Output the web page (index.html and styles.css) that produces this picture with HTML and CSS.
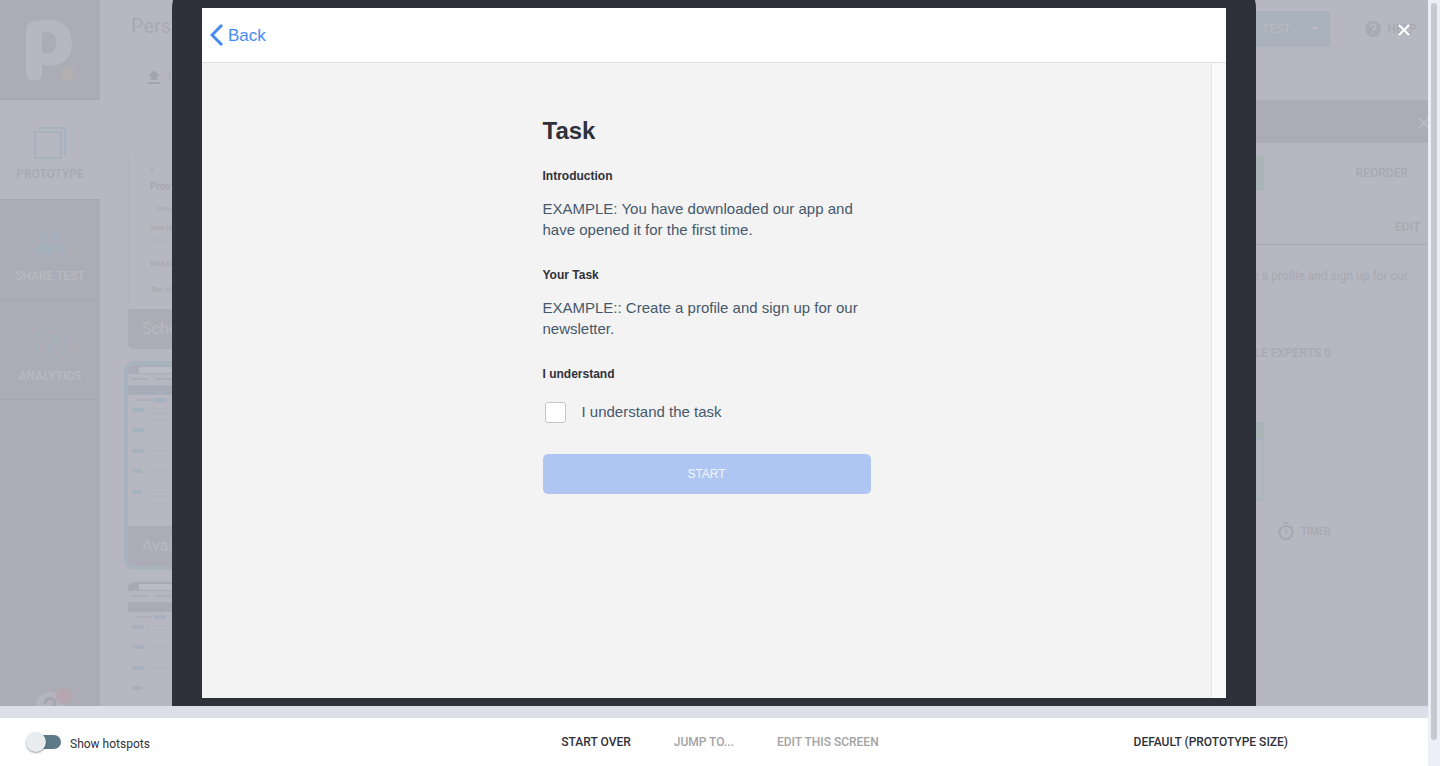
FILE: index.html
```html
<!DOCTYPE html>
<html lang="en">
<head>
<meta charset="utf-8">
<title>Prototype preview</title>
<link rel="stylesheet" href="styles.css">
</head>
<body>
<div class="app">
  <main class="column">
    <div class="stage">
      <div class="workspace">
        <nav class="sidebar">
          <div class="logo">
            <svg width="100" height="100" viewBox="0 0 100 100" aria-hidden="true">
              <path fill="#b7b7c1" fill-rule="evenodd" d="M26 30Q26 24 32 22Q40 19.500 50 20C64 20 72 29 72 43C72 57 64 65.500 51 65.500Q46 65.500 42 64V74Q42 80 36 80H32Q26 80 26 74ZM42 33V52Q45 53.500 48 53.500Q56 53 56 43Q56 32 48 32Q45 32 42 33Z"/>
              <path fill="#b5b0b0" d="M61 79.500V73A6.500 6.500 0 1 1 67.500 79.500Z"/>
            </svg>
          </div>
          <a class="side-item side-active" href="#">
            <svg width="32" height="32" viewBox="0 0 32 32" fill="none" stroke="#a5b3be" stroke-width="2" aria-hidden="true"><path d="M1 5H27V31H1ZM4 1H31V28"/></svg>
            <span>PROTOTYPE</span>
          </a>
          <a class="side-item" href="#">
            <svg width="32" height="32" viewBox="0 0 32 32" fill="#a3b0bb" aria-hidden="true"><circle cx="10.500" cy="9.500" r="4.500"/><circle cx="22" cy="9.500" r="4.500"/><path d="M0 27V23C0 19 7 17 10.500 17S20.500 19 20.500 23V27ZM21.500 17C25 17 32 19 32 23V27H23V23C23 20.500 22 18.500 20.500 17Z"/></svg>
            <span>SHARE TEST</span>
          </a>
          <a class="side-item" href="#">
            <svg width="32" height="32" viewBox="0 0 32 32" fill="none" stroke="#a3b0bb" stroke-width="2" aria-hidden="true"><circle cx="16" cy="16" r="15"/><path d="M6 16A10.500 10.500 0 0 1 26 16M17 20.500L20 9"/><circle cx="16" cy="23" r="2.500"/></svg>
            <span>ANALYTICS</span>
          </a>
          <button class="side-help" type="button" aria-label="Help">
            <svg width="40" height="40" viewBox="0 0 40 40" aria-hidden="true"><circle cx="16" cy="19" r="15" fill="#b4b4be"/><path d="M11 16C11 8 22 9 21 16C21 19 16 20 16 24" fill="none" stroke="#a5a5af" stroke-width="3"/><circle cx="30" cy="8" r="8" fill="#b7a6b0"/></svg>
          </button>
        </nav>

        <section class="board">
          <header class="board-head">
            <h1 class="project">Pers</h1>
            <button class="upload" type="button">
              <svg width="12" height="14" viewBox="0 0 12 14" fill="#a3a3ad" aria-hidden="true"><path d="M6 0L12 6H9V10H3V6H0ZM0 12H12V14H0Z"/></svg>
              <span>U</span>
            </button>
          </header>
          <div class="cards">
            <article class="card">
              <div class="card-list">
                <span>×</span><b class="provider">Prov</b><span class="indent">3 reque</span><b>Your Up</b><span class="faint">Date</span><b>Wed 12.</b><b>Thu 12.</b>
              </div>
              <h2 class="card-title">Sche</h2>
            </article>
            <article class="card card-selected">
              <svg class="thumb" width="240" height="161" viewBox="0 0 240 161" aria-hidden="true">
                <rect width="240" height="9" fill="#a8adb8"/><rect x="11" y="2" width="229" height="6" fill="#b9bbc5"/>
                <path d="M3 14H20M27 14H43M8 35H24" stroke="#aeaeb9" stroke-width="2"/>
                <rect y="20" width="240" height="10" fill="#a7adb8"/>
                <path d="M28 35H36M6 45H14M6 65H14M6 86H14M6 106H12M6 127H12" stroke="#a5b2c0" stroke-width="4" stroke-linecap="round"/>
                <path d="M19 44H44M19 48H42M19 65H44M19 86H44M19 106H44M19 110H22M19 127H44M19 131H42" stroke="#b0b1bb"/>
                <path d="M4 55H15M24 55H42M4 76H15M24 76H42M4 97H15M24 97H42M4 117H15M24 117H42M4 138H15M24 138H42" stroke="#b4b4be"/>
              </svg>
              <h2 class="card-title">Avai</h2>
            </article>
            <article class="card">
              <svg class="thumb" width="240" height="161" viewBox="0 0 240 161" aria-hidden="true">
                <rect width="240" height="9" fill="#a8a9b4"/><rect x="11" y="2" width="229" height="6" fill="#b9bbc5"/>
                <path d="M3 14H20M27 14H43M8 35H24" stroke="#aeaeb9" stroke-width="2"/>
                <rect y="20" width="240" height="10" fill="#a8aab6"/>
                <path d="M28 35H36M6 45H14M6 65H14M6 86H14M6 106H12" stroke="#a8b0bf" stroke-width="4" stroke-linecap="round"/>
                <path d="M19 44H44M19 48H42M19 65H44M19 86H44M19 106H44M19 110H22" stroke="#b0b1bb"/>
                <path d="M4 55H15M24 55H42M4 76H15M24 76H42M4 97H15M24 97H42M4 117H15M24 117H42" stroke="#b4b4be"/>
              </svg>
            </article>
          </div>
        </section>

        <aside class="panel">
          <header class="panel-top">
            <button class="test" type="button"><span>TEST</span>
              <svg width="28" height="20" viewBox="0 0 28 20" aria-hidden="true"><path d="M5 0V20" stroke="#b1b5bf"/><path d="M12 8H20L16 12Z" fill="#b9bac4"/></svg>
            </button>
            <a class="help" href="#">
              <svg width="18" height="18" viewBox="0 0 18 18" aria-hidden="true"><circle cx="9" cy="9" r="8" fill="#a9a9b3"/><path d="M6.500 7C6.500 3 12 4 11.500 7C11.500 8.500 9 9 9 11M9 12.500V14" fill="none" stroke="#b7b7c1" stroke-width="2"/></svg>
              <span>HELP</span>
            </a>
          </header>
          <div class="panel-bar">
            <svg width="12" height="12" viewBox="0 0 12 12" stroke="#b9b9c2" stroke-width="2" aria-hidden="true"><path d="M1 1L11 11M11 1L1 11"/></svg>
          </div>
          <div class="reorder-row"><span class="green"></span><span>REORDER</span></div>
          <div class="edit-row"><button type="button">EDIT</button></div>
          <p class="summary">Create a profile and sign up for our</p>
          <p class="experts">LE EXPERTS 0</p>
          <div class="preview"></div>
          <div class="timer">
            <svg width="16" height="18" viewBox="0 0 16 18" fill="none" stroke="#a6a6b0" stroke-width="2" aria-hidden="true"><circle cx="8" cy="10.500" r="6.500"/><path d="M5.500 1H10.500M8 7.500V11.500M13 4L14.500 5.500"/></svg>
            <span>TIMER</span>
          </div>
        </aside>
      </div>

      <div class="modal" role="dialog" aria-label="Prototype preview">
        <div class="device">
          <div class="screen">
            <header class="screen-nav">
              <a class="back" href="#">
                <svg width="14" height="22" viewBox="0 0 14 22" fill="none" stroke="#478af0" stroke-width="3" aria-hidden="true"><path d="M12 1L2 11L12 21"/></svg>
                <span>Back</span>
              </a>
            </header>
            <div class="screen-body">
              <div class="page">
                <form class="task">
                  <h2>Task</h2>
                  <h3>Introduction</h3>
                  <p>EXAMPLE: You have downloaded our app and have opened it for the first time.</p>
                  <h3>Your Task</h3>
                  <p>EXAMPLE:: Create a profile and sign up for our newsletter.</p>
                  <h3>I understand</h3>
                  <label class="check"><input type="checkbox"><span>I understand the task</span></label>
                  <button class="start" type="button">START</button>
                </form>
              </div>
              <div class="track"></div>
            </div>
          </div>
        </div>
        <button class="close" type="button" aria-label="Close">
          <svg width="12" height="12" viewBox="0 0 12 12" stroke="#fff" stroke-width="2" aria-hidden="true"><path d="M1 1L11 11M11 1L1 11"/></svg>
        </button>
      </div>
    </div>

    <footer class="toolbar">
      <label class="hotspots"><input type="checkbox" role="switch"><span>Show hotspots</span></label>
      <div class="actions">
        <button type="button">START OVER</button>
        <button type="button" class="muted">JUMP TO...</button>
        <button type="button" class="muted">EDIT THIS SCREEN</button>
      </div>
      <div class="sizing"><button type="button">DEFAULT (PROTOTYPE SIZE)</button></div>
    </footer>
  </main>
  <div class="scrollbar"><div class="thumbbar"></div></div>
</div>
</body>
</html>
```
FILE: styles.css
```css
* { box-sizing: border-box; }
body { margin: 0; font-family: Roboto, "Liberation Sans", sans-serif; font-size: 12px; color: #2f313a; }
h1, h2, h3, p { margin: 0; font-weight: 400; }
button { border: 0; padding: 0; background: none; font: inherit; color: inherit; }
a { color: inherit; text-decoration: none; }
svg { display: block; flex: none; }

.app { display: flex; height: 100vh; background: #ededf5; overflow: hidden; }
.column { flex: 1; min-width: 0; display: flex; flex-direction: column; }
.stage { flex: 1; min-height: 0; display: grid; grid-template: minmax(0, 1fr) / minmax(0, 1fr); overflow: hidden; }
.workspace, .modal { grid-area: 1 / 1; min-height: 0; }

/* Dimmed workspace */
.workspace { display: flex; background: #b7b7c1; color: #a8a8b2; overflow: hidden; }
.sidebar { width: 100px; display: flex; flex-direction: column; background: #abacb5; font-weight: 500; }
.logo { border-bottom: 1px solid #a5a5ae; height: 100px; flex: none; }
.side-item { height: 100px; flex: none; display: flex; flex-direction: column; align-items: center; justify-content: center; gap: 10px; border-bottom: 1px solid #a5a5ae; color: #b9b9c2; padding-top: 10px; }
.side-active { background: #b7b7c1; color: #a8a8b2; gap: 8px; padding-top: 8px; }
.side-help { margin: auto 0 -22px 34px; }

.board { flex: 1; min-width: 0; padding-left: 24px; overflow: hidden; }
.board-head { height: 100px; padding: 14px 7px; display: flex; flex-direction: column; gap: 24px; align-items: flex-start; }
.project { font-size: 20px; line-height: 24px; }
.upload { display: flex; align-items: center; gap: 8px; padding: 8px 17px; }
.cards { padding: 50px 4px 0; display: flex; flex-direction: column; gap: 16px; width: 248px; }
.card { border-radius: 6px; overflow: hidden; flex: none; }
.card-list { height: 159px; padding: 12px 21px; display: grid; grid-template-rows: 16px 18px 26px 12px 14px 32px 20px; align-items: center; font-size: 7px; line-height: 10px; border-left: 1px solid #b2b2bc; }
.card-list .provider { font-size: 10px; }
.card-list .indent { padding-left: 6px; }
.card-list .faint { color: #b0b0ba; }
.card-title { height: 40px; padding: 0 14px; font-size: 16px; line-height: 40px; background: #abacb5; color: #b9b9c2; }
.card-selected { box-shadow: 0 0 0 4px #a7b3be; }

.panel { width: 400px; display: flex; flex-direction: column; }
.panel-top { height: 100px; display: flex; justify-content: flex-end; align-items: flex-start; gap: 34px; padding: 11px 11px; font-weight: 500; }
.test { height: 36px; width: 140px; border-radius: 4px; display: flex; align-items: center; justify-content: flex-end; gap: 8px; padding-right: 3px; background: #a9b1bd; color: #b9b9c2; }
.help { display: flex; align-items: center; gap: 6px; height: 36px; font-size: 12px; }
.panel-bar { height: 43px; flex: none; display: flex; align-items: center; justify-content: flex-end; background: #abacb5; margin-right: -2px; padding-top: 2px; }
.reorder-row { height: 61px; flex: none; display: flex; align-items: center; justify-content: space-between; padding: 0 20px 2px 96px; font-weight: 500; }
.green { width: 140px; height: 36px; border-radius: 4px; background: #a9b5b5; }
.edit-row { height: 41px; flex: none; display: flex; align-items: center; justify-content: flex-end; padding: 6px 8px 0; border-bottom: 1px solid #a9a9b3; font-weight: 500; }
.summary { padding: 24px 20px 0; line-height: 14px; text-align: right; }
.experts { padding: 63px 97px 0; line-height: 14px; font-weight: 500; text-align: right; }
.preview { width: 140px; height: 79px; flex: none; margin: 62px 0 0 96px; border: 1px solid #a9b5b5; border-top: 16px solid #a9b5b5; border-radius: 4px 4px 0 0; background: linear-gradient(#a8b3c2 2px, #b1b7bf 2px); }
.timer { display: flex; align-items: center; gap: 7px; padding: 21px 0 0 250px; font-size: 10px; font-weight: 500; }

/* Preview overlay */
.modal { position: relative; overflow: hidden; display: flex; justify-content: center; padding: 0 172px; }
.device { flex: 1; max-width: 1084px; margin-top: -22px; padding: 30px 30px 8px; border-radius: 30px 30px 0 0; background: #2f313a; display: flex; }
.screen { flex: 1; display: flex; flex-direction: column; background: #fff; font-family: "Liberation Sans", Arial, sans-serif; }
.screen-nav { height: 55px; flex: none; display: flex; align-items: center; padding: 0 8px; border-bottom: 1px solid #dedede; }
.back { display: flex; align-items: center; gap: 4px; color: #478af0; font-size: 17px; line-height: 20px; }
.back span { padding-top: 2px; }
.screen-body { flex: 1; display: flex; }
.page { flex: 1; display: flex; justify-content: center; align-items: flex-start; background: #f3f3f3; }
.track { width: 15px; background: #fafafa; border-left: 1px solid #e6e6e6; }
.task { width: 328px; padding-top: 54px; display: flex; flex-direction: column; }
.task h2 { font-size: 24px; line-height: 28px; font-weight: 700; }
.task h3 { margin-top: 24px; font-size: 12px; line-height: 14px; font-weight: 700; }
.task p { margin: 15px 0 4px; font-size: 15px; line-height: 21px; color: #46586b; }
.task p + h3 { margin-top: 24px; }
.check { display: flex; align-items: center; gap: 16px; margin: 20px 0 0 2px; font-size: 15px; line-height: 22px; color: #46586b; }
.check input { appearance: none; width: 21px; height: 21px; margin: 0; border: 1px solid #c4c5cc; border-radius: 3px; background: #fff; }
.start { height: 40px; margin-top: 31px; border-radius: 5px; background: #b0c6f2; color: #f1f5fd; font-size: 12px; }
.close { position: absolute; top: 24px; right: 18px; }

/* Bottom toolbar */
.toolbar { height: 60px; flex: none; display: grid; grid-template-columns: 1fr auto 1fr; align-items: center; padding: 0 12px 0 24px; background: #fff; border-top: 12px solid #dcdee9; font-weight: 500; }
.hotspots { display: flex; align-items: center; gap: 9px; font-weight: 400; padding-top: 4px; }
.hotspots input { appearance: none; width: 34px; height: 14px; margin: 0 0 4px 3px; border-radius: 7px; background: #5d7a88; display: flex; align-items: center; }
.hotspots input::before { content: ""; flex: none; width: 20px; height: 20px; margin-left: -1px; border-radius: 50%; background: #e9edf0; box-shadow: 0 1px 2px #0006; }
.hotspots input:checked { justify-content: flex-end; }
.actions { display: flex; gap: 43px; }
.muted { color: #a3a3a3; }
.sizing { display: flex; justify-content: flex-end; padding-right: 128px; }

.scrollbar { width: 12px; padding: 3px; }
.thumbbar { width: 6px; height: 97%; border-radius: 3px; background: #c8c9cf; }
```
